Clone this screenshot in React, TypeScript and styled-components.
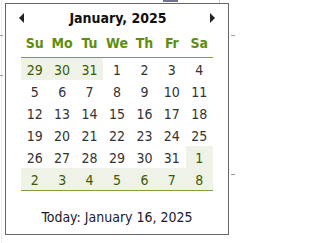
import React from "react";
import styled, { createGlobalStyle } from "styled-components";

const Global = createGlobalStyle`
  html, body { margin: 0; padding: 0; background: #ffffff; }
  body { width: 235px; height: 243px; overflow: hidden; position: relative; }
`;

const Canvas = styled.div`
  position: relative;
  width: 235px;
  height: 243px;
  padding: 3px 0 0 5px;
  box-sizing: border-box;
`;

const GridLine = styled.div<{ $x: number; $y: number; $w: number; $h: number; $c: string }>`
  position: absolute;
  left: ${(p) => p.$x}px;
  top: ${(p) => p.$y}px;
  width: ${(p) => p.$w}px;
  height: ${(p) => p.$h}px;
  background: ${(p) => p.$c};
`;

const Popup = styled.div`
  position: relative;
  box-sizing: border-box;
  width: 224px;
  height: 232px;
  border: 1px solid #666666;
  background: #ffffff;
  display: flex;
  flex-direction: column;
  font-family: "DejaVu Sans Condensed", "DejaVu Sans", sans-serif;
  font-stretch: condensed;
  font-size: 14px;
  color: #333333;
`;

const Header = styled.div`
  height: 26px;
  display: flex;
  align-items: center;
  justify-content: space-between;
  padding: 2px 13px 0 13px;
  box-sizing: border-box;
`;

const Title = styled.div`
  font-weight: bold;
  font-size: 14px;
  color: #111111;
  padding-left: 2px;
`;

const Arrow = styled.div<{ $dir: "left" | "right" }>`
  width: 0;
  height: 0;
  border-top: 5px solid transparent;
  border-bottom: 5px solid transparent;
  ${(p) =>
    p.$dir === "left"
      ? "border-right: 5px solid #222;"
      : "border-left: 5px solid #222;"}
`;

const Week = styled.div`
  display: grid;
  grid-template-columns: repeat(7, 1fr);
  margin: 0 15px 0 15px;
`;

const DayNames = styled(Week)`
  height: 27px;
  align-items: center;
  border-bottom: 1px solid #80a040;
`;

const DayName = styled.div`
  text-align: center;
  font-weight: bold;
  color: #5f8d0c;
  padding-bottom: 1px;
`;

const Dates = styled(Week)`
  grid-auto-rows: 22px;
  border-bottom: 1px solid #80a040;
`;

const Cell = styled.div<{ $other: boolean }>`
  display: flex;
  align-items: center;
  justify-content: center;
  background: ${(p) => (p.$other ? "#eff3e7" : "transparent")};
  color: ${(p) => (p.$other ? "#3b5a04" : "#333333")};
  padding-top: 1px;
`;

const Today = styled.div`
  margin-top: 18px;
  text-align: center;
  color: #1a1a2a;
  font-size: 14px;
`;

const names = ["Su", "Mo", "Tu", "We", "Th", "Fr", "Sa"];

const days: { d: number; other: boolean }[] = [];
[29, 30, 31].forEach((d) => days.push({ d, other: true }));
for (let d = 1; d <= 31; d++) days.push({ d, other: false });
for (let d = 1; d <= 8; d++) days.push({ d, other: true });

export default function App() {
  return (
    <>
      <Global />
      <Canvas>
        <GridLine $x={1} $y={0} $w={1} $h={243} $c="#ececec" />
        <GridLine $x={0} $y={35} $w={3} $h={1} $c="#9a9a9a" />
        <GridLine $x={0} $y={75} $w={3} $h={1} $c="#9a9a9a" />
        <GridLine $x={231} $y={35} $w={4} $h={1} $c="#9a9a9a" />
        <GridLine $x={231} $y={174} $w={4} $h={1} $c="#9a9a9a" />
        <GridLine $x={163} $y={0} $w={15} $h={2} $c="#6e7590" />
        <GridLine $x={219} $y={0} $w={1} $h={3} $c="#c8c8c8" />
        <Popup>
          <Header>
            <Arrow $dir="left" />
            <Title>January, 2025</Title>
            <Arrow $dir="right" />
          </Header>
          <DayNames>
            {names.map((n) => (
              <DayName key={n}>{n}</DayName>
            ))}
          </DayNames>
          <Dates>
            {days.map((x, i) => (
              <Cell key={i} $other={x.other}>
                {x.d}
              </Cell>
            ))}
          </Dates>
          <Today>Today: January 16, 2025</Today>
        </Popup>
      </Canvas>
    </>
  );
}
